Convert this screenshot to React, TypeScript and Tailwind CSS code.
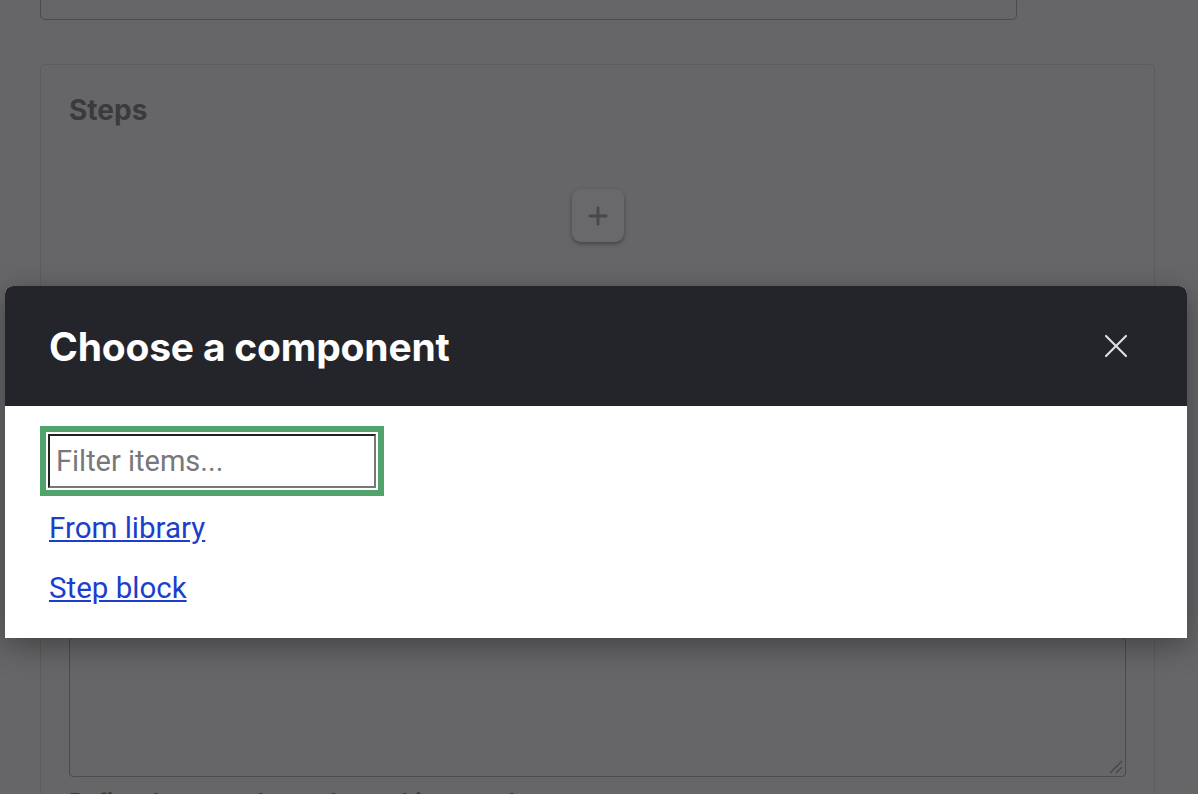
import { X, Plus } from 'lucide-react';

export default function App() {
  return (
    <div className="relative h-[794px] overflow-hidden bg-[#666668] font-['Inter','Liberation_Sans',sans-serif]">
      {/* Page behind the dialog (dimmed) */}
      <div className="px-[40px]">
        <div className="h-[20px] w-[977px] rounded-b-[5px] border border-t-0 border-[#4b4b4e]" />

        <div className="mt-[44px] w-[1115px] rounded-t-[5px] border border-b-0 border-[#5d5d60] px-[28px] pt-[28px]">
          <h2 className="text-[28px] font-bold leading-[34px] text-[#3a3a3f]">Steps</h2>

          <div className="mt-[62px] flex justify-center">
            <button
              type="button"
              className="flex h-[53px] w-[52px] items-center justify-center rounded-[9px] bg-[#69696b] shadow-[0_2px_4px_rgba(0,0,0,0.35)]"
            >
              <Plus size={28} strokeWidth={2.4} className="text-[#48484b]" />
            </button>
          </div>

          <div className="h-[395px]" />

          <div className="relative h-[140px] rounded-[4px] border border-[#4b4b4e]">
            <svg className="absolute bottom-[2px] right-[2px]" width="14" height="14" viewBox="0 0 14 14">
              <path d="M1 13 L13 1 M7 13 L13 7" stroke="#454548" strokeWidth="1.3" />
            </svg>
          </div>

          <p className="mt-[8px] text-[22px] font-bold text-[#3a3a3f]">Define the steps that make up this procedure</p>
        </div>
      </div>

      {/* Dialog */}
      <div className="absolute left-[5px] top-[286px] w-[1182px] overflow-hidden rounded-t-[8px] bg-white shadow-[0_8px_30px_rgba(0,0,0,0.35)]">
        <div className="flex h-[120px] items-center justify-between bg-[#24252a] pl-[44px] pr-[51px]">
          <h1 className="text-[39px] font-bold leading-none tracking-[-0.2px] text-white">Choose a component</h1>
          <button type="button" className="text-[#dedede]">
            <X size={40} strokeWidth={1.3} />
          </button>
        </div>

        <div className="flex h-[232px] flex-col items-start px-[43px] pt-[28px] font-['Roboto','Liberation_Sans',sans-serif]">
          <input
            type="text"
            placeholder="Filter items..."
            className="h-[54px] w-[328px] border-2 border-b-[#777] border-l-[#222] border-r-[#777] border-t-[#222] px-[6px] text-[29px] text-[#222] outline-[6px] outline-offset-[2px] outline-[#4fa36b] outline-solid placeholder:text-[#77777c]"
          />
          <a href="#" className="ml-[1px] mt-[20px] text-[29.5px] leading-[40px] text-[#1b3fcc] underline">
            From library
          </a>
          <a href="#" className="ml-[1px] mt-[20px] text-[29.5px] leading-[40px] text-[#1b3fcc] underline">
            Step block
          </a>
        </div>
      </div>
    </div>
  );
}
